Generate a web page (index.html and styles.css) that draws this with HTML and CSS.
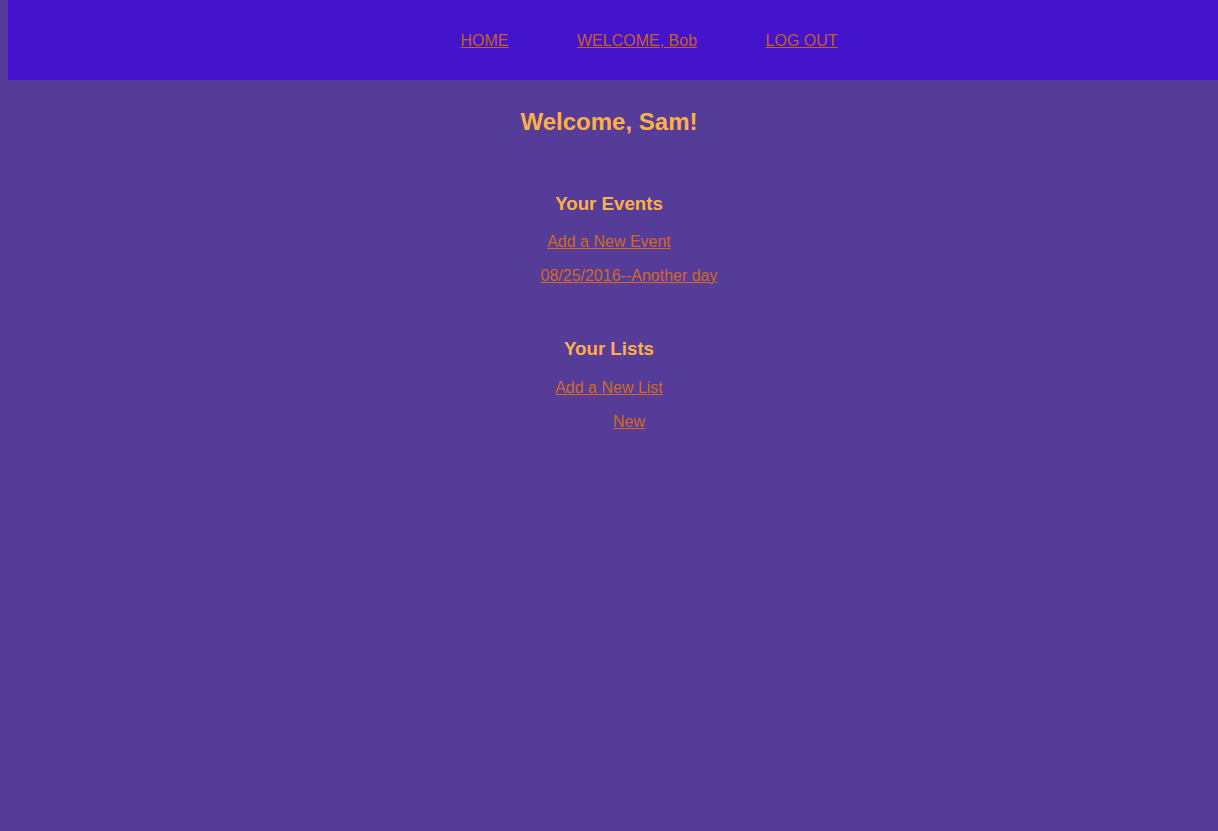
FILE: index.html
```html
<!DOCTYPE html>
<html>
<head>
<meta charset="utf-8">
<title>Dashboard</title>
<link rel="stylesheet" href="styles.css">
</head>
<body>
<header class="topbar">
  <nav class="nav">
    <a href="#" class="nav-link">HOME</a>
    <a href="#" class="nav-link">WELCOME, Bob</a>
    <a href="#" class="nav-link">LOG OUT</a>
  </nav>
</header>
<main class="content">
  <h1 class="greeting">Welcome, Sam!</h1>
  <section class="block block-events">
    <h3 class="block-title">Your Events</h3>
    <p class="add"><a href="#" class="link">Add a New Event</a></p>
    <ul class="items">
      <li class="item"><a href="#" class="link">08/25/2016--Another day</a></li>
    </ul>
  </section>
  <section class="block block-lists">
    <h3 class="block-title">Your Lists</h3>
    <p class="add"><a href="#" class="link">Add a New List</a></p>
    <ul class="items">
      <li class="item"><a href="#" class="link">New</a></li>
    </ul>
  </section>
</main>
</body>
</html>
```
FILE: styles.css
```css
html, body {
  margin: 0;
  padding: 0;
}
body {
  background: #553c98;
  font-family: "Liberation Sans", Arial, sans-serif;
  font-size: 16px;
  min-height: 831px;
  overflow: hidden;
}
.topbar {
  margin-left: 8px;
  height: 80px;
  box-sizing: border-box;
  padding-top: 2px;
  background: #4414cc;
  display: flex;
  align-items: center;
}
.nav {
  flex: 1;
  display: flex;
  justify-content: flex-start;
  gap: 68.5px;
  padding-left: 452.5px;
  line-height: 18px;
}
.nav-link {
  color: #c0602a;
  text-decoration: underline;
}
.content {
  text-align: center;
}
.greeting {
  margin: 28px 0 0;
  font-size: 24px;
  line-height: 28px;
  font-weight: bold;
  color: #fcb045;
}
.block-title {
  margin: 53px 0 0;
  font-size: 18.72px;
  line-height: 22px;
  font-weight: bold;
  color: #fcb045;
}
.block-events .block-title {
  margin-top: 57px;
}
.add {
  margin: 19px 0 0;
  line-height: 18px;
}
.block-events .add {
  margin-top: 18px;
}
.items {
  list-style: none;
  margin: 16px 0 0;
  padding-left: 40px;
  line-height: 18px;
}
.link {
  color: #d2691e;
  text-decoration: underline;
}
```
